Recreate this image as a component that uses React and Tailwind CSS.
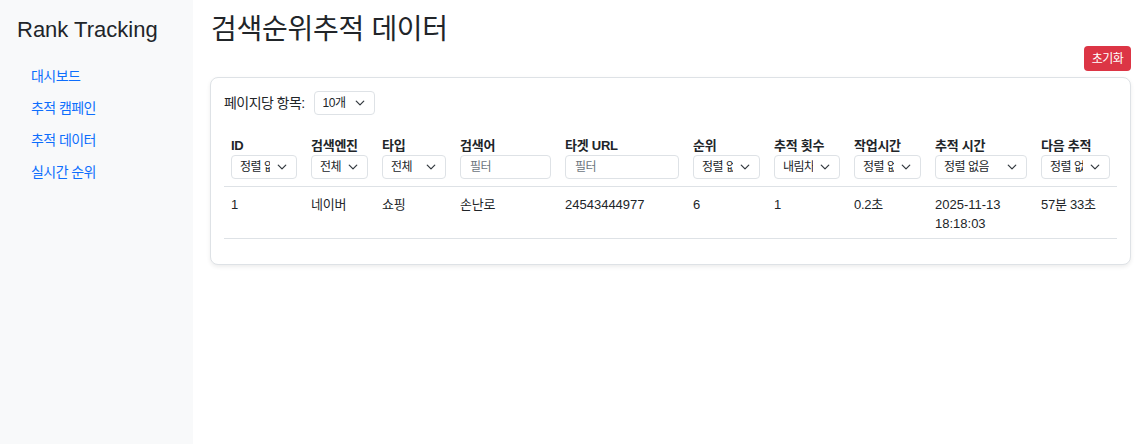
import React from "react";

const KR = "tracking-[-0.04em]";
const KR2 = "tracking-[-0.02em]";

function Chevron() {
  return (
    <svg width="10" height="10" viewBox="0 0 16 16" fill="none" stroke="#343a40" strokeWidth="2" strokeLinecap="round" strokeLinejoin="round">
      <path d="M2 5l6 6 6-6" />
    </svg>
  );
}

function FakeSelect({ value, className = "" }) {
  return (
    <div className={`relative h-[24px] rounded-[4px] border border-[#dee2e6] bg-white pl-[8px] pr-[26px] flex items-center font-normal ${className}`}>
      <span className={`block overflow-hidden whitespace-nowrap text-[12px] leading-[22px] text-[#212529] ${KR}`}>{value}</span>
      <span className="absolute right-[9px] top-[6px]"><Chevron /></span>
    </div>
  );
}

function FakeInput() {
  return (
    <div className="h-[24px] rounded-[4px] border border-[#dee2e6] bg-white pl-[9px] flex items-center font-normal">
      <span className={`text-[12px] text-[#6c757d] ${KR}`}>필터</span>
    </div>
  );
}

const cols = [
  { label: "ID", w: 80, ctrl: <FakeSelect value="정렬 없음" /> },
  { label: "검색엔진", w: 71, ctrl: <FakeSelect value="전체" /> },
  { label: "타입", w: 78, ctrl: <FakeSelect value="전체" /> },
  { label: "검색어", w: 105, ctrl: <FakeInput /> },
  { label: "타겟 URL", w: 128, ctrl: <FakeInput /> },
  { label: "순위", w: 81, ctrl: <FakeSelect value="정렬 없음" /> },
  { label: "추적 횟수", w: 80, ctrl: <FakeSelect value="내림차순" /> },
  { label: "작업시간", w: 81, ctrl: <FakeSelect value="정렬 없음" /> },
  { label: "추적 시간", w: 106, ctrl: <FakeSelect value="정렬 없음" /> },
  { label: "다음 추적", w: 83, ctrl: <FakeSelect value="정렬 없음" /> },
];

const row = ["1", "네이버", "쇼핑", "손난로", "24543444977", "6", "1", "0.2초", "2025-11-13\n18:18:03", "57분 33초"];

export default function App() {
  return (
    <div className="flex min-h-[444px] bg-white text-[#212529] font-['Liberation_Sans','Noto_Sans_CJK_KR',sans-serif]">
      <aside className="w-[193px] shrink-0 bg-[#f8f9fa] pl-[17px] pt-[13px]">
        <div className="text-[22px] leading-[34px] text-[#212529]">Rank Tracking</div>
        <nav className={`mt-[13px] pl-[14px] flex flex-col text-[14px] leading-[32px] text-[#0d6efd] ${KR}`}>
          <a>대시보드</a>
          <a>추적 캠페인</a>
          <a>추적 데이터</a>
          <a>실시간 순위</a>
        </nav>
      </aside>
      <main className="flex-1 pl-[17px] pr-[15px] pt-[13px]">
        <h1 className="text-[28px] leading-[33px] font-normal pl-[1px] tracking-[-0.01em]">검색순위추적 데이터</h1>
        <div className="flex justify-end">
          <button className={`h-[25px] w-[47px] rounded-[4px] bg-[#dc3545] text-white text-[12px] ${KR}`}>초기화</button>
        </div>
        <div className="mt-[6px] rounded-[8px] border border-[#dee2e6] bg-white p-[13px] shadow-[0_2px_4px_rgba(0,0,0,0.075)]">
          <div className="flex items-center gap-[9px]">
            <span className={`text-[14px] ${KR}`}>페이지당 항목:</span>
            <FakeSelect value="10개" className="w-[61px]" />
          </div>
          <table className="mt-[15px] mb-[12px] w-full table-fixed border-collapse text-[13px]">
            <colgroup>
              {cols.map((c, i) => (
                <col key={i} style={{ width: c.w }} />
              ))}
            </colgroup>
            <thead>
              <tr className="border-b border-[#dee2e6]">
                {cols.map((c, i) => (
                  <th key={i} className="px-[7px] pt-[8px] pb-[7px] text-left align-top font-bold">
                    <div className={`leading-[16px] mb-[1px] whitespace-nowrap ${KR2}`}>{c.label}</div>
                    {c.ctrl}
                  </th>
                ))}
              </tr>
            </thead>
            <tbody>
              <tr className="border-b border-[#dee2e6]">
                {row.map((v, i) => (
                  <td key={i} className={`px-[7px] pt-[8px] pb-[5px] align-top leading-[19px] whitespace-pre-line ${/[가-힣]/.test(v) ? KR2 : ""}`}>
                    {v}
                  </td>
                ))}
              </tr>
            </tbody>
          </table>
        </div>
      </main>
    </div>
  );
}
